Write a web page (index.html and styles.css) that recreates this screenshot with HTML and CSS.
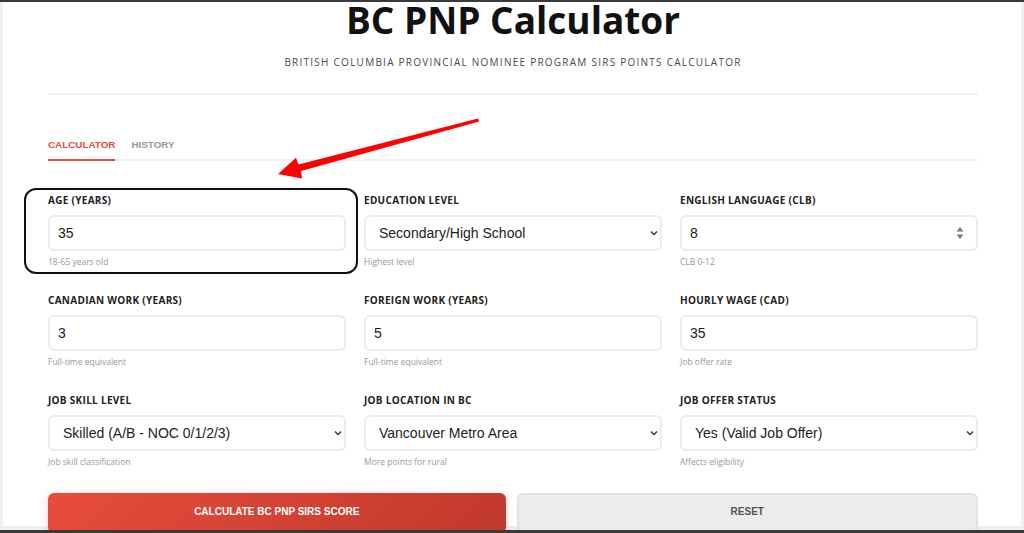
FILE: index.html
```html
<!DOCTYPE html>
<html lang="en">
<head>
  <meta charset="UTF-8" />
  <meta name="viewport" content="width=device-width, initial-scale=1.0" />
  <title>BC PNP Calculator</title>
  <link rel="stylesheet" href="styles.css">
</head>
<body>
  <div class="screen">
    <div class="page">
      <div class="container">
        <div class="header">
          <h1>BC PNP Calculator</h1>
          <p class="subtitle">British Columbia Provincial Nominee Program SIRS Points Calculator</p>
        </div>

        <div class="tabs">
          <span class="tab active">CALCULATOR</span>
          <span class="tab">HISTORY</span>
        </div>

        <div class="form-grid">
          <div class="field">
            <label for="age">Age (Years)</label>
            <input id="age" type="text" value="35" />
            <small>18-65 years old</small>
          </div>
          <div class="field">
            <label for="education">Education Level</label>
            <div class="select-wrap">
              <select id="education">
                <option>Secondary/High School</option>
                <option>Diploma/Certificate</option>
                <option>Bachelor's Degree</option>
                <option>Master's Degree</option>
                <option>Doctoral Degree</option>
              </select>
              <svg class="chevron" width="8" height="6" viewBox="0 0 8 6"><path d="M1 1.5 L4 4.5 L7 1.5" fill="none" stroke="#333" stroke-width="1.3"/></svg>
            </div>
            <small>Highest level</small>
          </div>
          <div class="field">
            <label for="english">English Language (CLB)</label>
            <div class="select-wrap">
              <input id="english" type="text" value="8" />
              <svg class="spinner" width="8" height="14" viewBox="0 0 8 14"><path d="M4 1 L7.5 5.5 H0.5 Z M4 13 L7.5 8.5 H0.5 Z" fill="#777"/></svg>
            </div>
            <small>CLB 0-12</small>
          </div>

          <div class="field">
            <label for="canadian">Canadian Work (Years)</label>
            <input id="canadian" type="text" value="3" />
            <small>Full-time equivalent</small>
          </div>
          <div class="field">
            <label for="foreign">Foreign Work (Years)</label>
            <input id="foreign" type="text" value="5" />
            <small>Full-time equivalent</small>
          </div>
          <div class="field">
            <label for="wage">Hourly Wage (CAD)</label>
            <input id="wage" type="text" value="35" />
            <small>Job offer rate</small>
          </div>

          <div class="field">
            <label for="skill">Job Skill Level</label>
            <div class="select-wrap">
              <select id="skill">
                <option>Skilled (A/B - NOC 0/1/2/3)</option>
                <option>Entry Level (C/D - NOC 4/5)</option>
              </select>
              <svg class="chevron" width="8" height="6" viewBox="0 0 8 6"><path d="M1 1.5 L4 4.5 L7 1.5" fill="none" stroke="#333" stroke-width="1.3"/></svg>
            </div>
            <small>Job skill classification</small>
          </div>
          <div class="field">
            <label for="location">Job Location in BC</label>
            <div class="select-wrap">
              <select id="location">
                <option>Vancouver Metro Area</option>
                <option>Squamish, Abbotsford, Agassiz, Mission, Chilliwack</option>
                <option>Other Areas</option>
              </select>
              <svg class="chevron" width="8" height="6" viewBox="0 0 8 6"><path d="M1 1.5 L4 4.5 L7 1.5" fill="none" stroke="#333" stroke-width="1.3"/></svg>
            </div>
            <small>More points for rural</small>
          </div>
          <div class="field">
            <label for="offer">Job Offer Status</label>
            <div class="select-wrap">
              <select id="offer">
                <option>Yes (Valid Job Offer)</option>
                <option>No Job Offer</option>
              </select>
              <svg class="chevron" width="8" height="6" viewBox="0 0 8 6"><path d="M1 1.5 L4 4.5 L7 1.5" fill="none" stroke="#333" stroke-width="1.3"/></svg>
            </div>
            <small>Affects eligibility</small>
          </div>
        </div>

        <div class="actions">
          <button class="btn-primary">Calculate BC PNP SIRS Score</button>
          <button class="btn-secondary">Reset</button>
        </div>
      </div>
    </div>

    <!-- callout drawn on top of the form -->
    <div class="callout-box"></div>
    <svg class="callout-arrow" width="1024" height="533" viewBox="0 0 1024 533">
      <polygon points="478,118.5 479.2,121.6 301,171 302,178.5 278,174 296,157.8 298.5,164.5" fill="#ff0000"/>
    </svg>
  </div>
</body>
</html>
```

FILE: styles.css
```css
* {
  box-sizing: border-box;
}
body {
  margin: 0;
  background: #3a3a3a;
  font-family: 'Open Sans', 'Liberation Sans', sans-serif;
  overflow: hidden;
}
.screen {
  position: relative;
  margin-top: 2px;
  height: 528px;
  overflow: hidden;
  background: #eef0f4;
  padding: 0 3px;
}
.page {
  background: #fff;
  height: 100%;
  padding: 0 43px 0 45px;
}
.header {
  text-align: center;
  border-bottom: 2px solid #f0f0f0;
  padding-bottom: 24px;
}
h1 {
  margin: -4px 0 0;
  font-size: 37px;
  line-height: 44px;
  font-weight: 700;
  color: #111;
}
.subtitle {
  margin: 13px 0 0;
  font-size: 10px;
  line-height: 14px;
  letter-spacing: 1.25px;
  text-transform: uppercase;
  color: #4a4a4a;
}
.tabs {
  display: flex;
  gap: 16px;
  margin-top: 44px;
  border-bottom: 2px solid #f0f0f0;
}
.tab {
  font-family: 'Liberation Sans', Arial, sans-serif;
  font-size: 9.85px;
  line-height: 12px;
  font-weight: 700;
  color: #999;
  padding-bottom: 8px;
  margin-bottom: -2px;
  border-bottom: 2px solid transparent;
}
.tab.active {
  color: #e74c3c;
  border-bottom-color: #e74c3c;
}
.form-grid {
  display: grid;
  grid-template-columns: repeat(3, 1fr);
  column-gap: 18px;
  row-gap: 26px;
  margin-top: 32px;
}
.field label {
  display: block;
  font-size: 10px;
  line-height: 14px;
  font-weight: 700;
  letter-spacing: 0.3px;
  text-transform: uppercase;
  color: #222;
  margin-bottom: 8px;
}
.field input,
.field select {
  display: block;
  width: 100%;
  height: 36px;
  padding: 0 8px;
  border: 2px solid #ececec;
  border-radius: 6px;
  background: #fff;
  font-family: 'Liberation Sans', Arial, sans-serif;
  font-size: 14px;
  color: #222;
  outline: none;
}
.field select {
  appearance: none;
  -webkit-appearance: none;
  padding-left: 13px;
}
.select-wrap {
  position: relative;
}
.chevron {
  position: absolute;
  right: 4px;
  top: 15px;
}
.spinner {
  position: absolute;
  right: 14px;
  top: 11px;
}
.field small {
  display: block;
  margin-top: 5px;
  font-size: 8.5px;
  line-height: 11px;
  color: #999;
}
.actions {
  display: flex;
  gap: 11px;
  margin-top: 26px;
}
.actions button {
  flex: 1 1 0;
  min-width: 0;
  height: 40px;
  border-radius: 6px;
  font-family: 'Liberation Sans', Arial, sans-serif;
  font-size: 10px;
  font-weight: 700;
  text-transform: uppercase;
  padding: 0 0 4px;
  cursor: pointer;
}
.btn-primary {
  background: linear-gradient(135deg, #e74c3c, #c0392b);
  color: #fff;
  border: none;
  box-shadow: 0 2px 8px rgba(231, 76, 60, 0.25);
}
.btn-secondary {
  background: #ededed;
  color: #555;
  border: 2px solid #e2e2e2;
}
.callout-box {
  position: absolute;
  left: 24px;
  top: 186px;
  width: 334px;
  height: 86px;
  border: 2px solid #111;
  border-radius: 12px;
  pointer-events: none;
}
.callout-arrow {
  position: absolute;
  left: 0;
  top: -2px;
  pointer-events: none;
}
```
